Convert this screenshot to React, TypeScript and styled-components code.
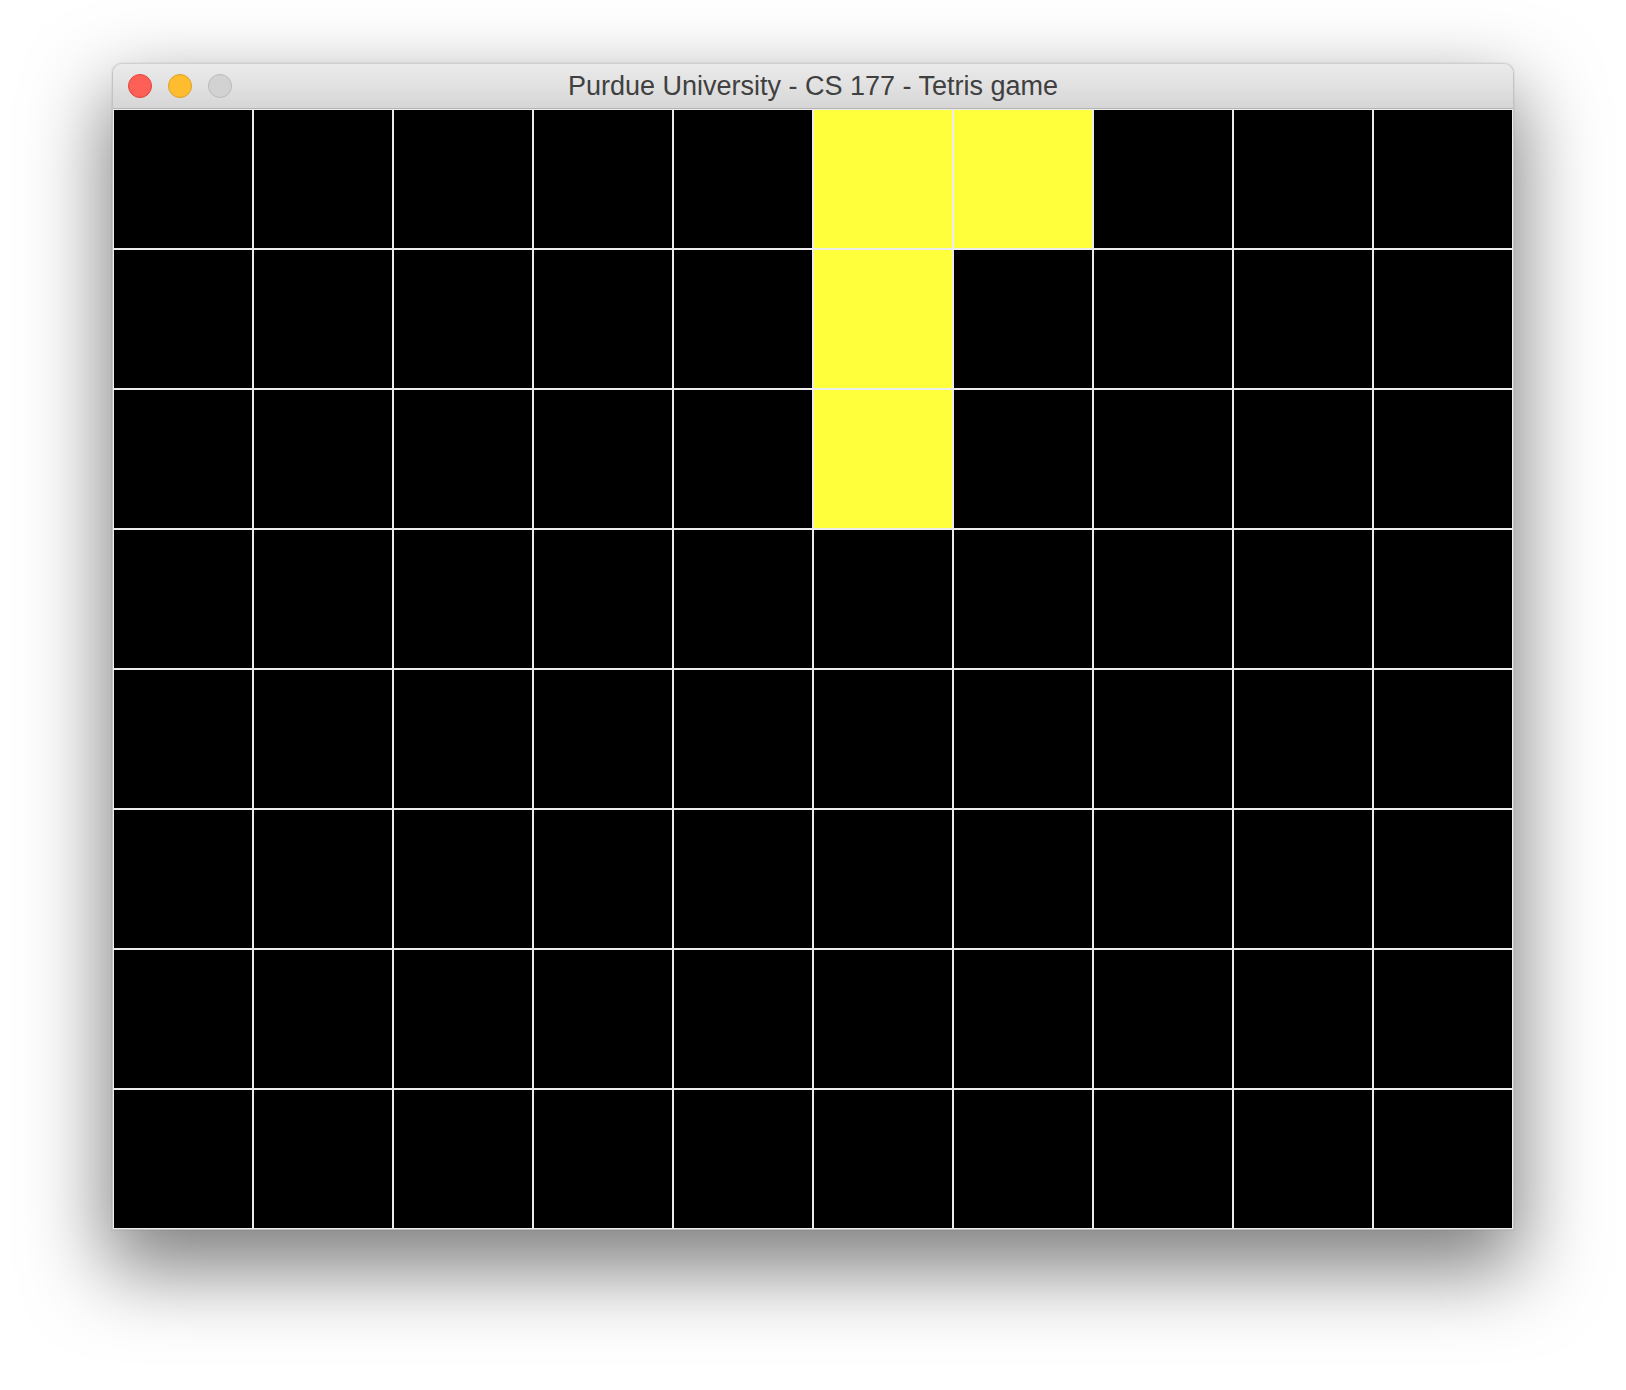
import React from 'react'
import styled, { createGlobalStyle } from 'styled-components'

const GlobalStyle = createGlobalStyle`
  html, body {
    margin: 0;
    padding: 0;
    background: #ffffff;
  }
  body {
    font-family: "Liberation Sans", Arial, sans-serif;
  }
`

const COLS = 10
const ROWS = 8
const CELL = 140

// filled cells of the falling piece, as "row-col"
const filled = new Set(['0-5', '0-6', '1-5', '2-5'])

const Page = styled.div`
  width: 1626px;
  height: 1390px;
  padding: 63px 0 0 112px;
  box-sizing: border-box;
  overflow: hidden;
`

const Window = styled.div`
  width: ${COLS * CELL + 2}px;
  border: 1px solid #c4c4c4;
  border-top-color: #d0d0d0;
  border-radius: 10px 10px 0 0;
  box-sizing: border-box;
  background: #ececec;
  box-shadow: 0 34px 80px 6px rgba(0, 0, 0, 0.5), 0 0 0 1px rgba(0, 0, 0, 0.04);
`

const TitleBar = styled.div`
  position: relative;
  height: 44px;
  display: flex;
  align-items: center;
  justify-content: center;
  border-radius: 9px 9px 0 0;
  background: linear-gradient(#ebebeb, #d6d6d6);
  border-bottom: 1px solid #b4b4b4;
`

const Lights = styled.div`
  position: absolute;
  left: 15px;
  top: 10px;
  display: flex;
  gap: 16px;
`

const Light = styled.span<{ $fill: string; $edge: string }>`
  width: 24px;
  height: 24px;
  border-radius: 50%;
  box-sizing: border-box;
  background: ${(p) => p.$fill};
  border: 1px solid ${(p) => p.$edge};
`

const Title = styled.div`
  font-size: 27px;
  color: #404040;
  margin-top: 1px;
`

const Board = styled.div`
  display: grid;
  grid-template-columns: repeat(${COLS}, ${CELL}px);
  grid-template-rows: repeat(${ROWS}, ${CELL}px);
  background: #000;
`

const Cell = styled.div<{ $on: boolean }>`
  box-sizing: border-box;
  border: 1px solid #ececec;
  background: ${(p) => (p.$on ? '#ffff3b' : '#000000')};
`

export default function App() {
  const cells = []
  for (let r = 0; r < ROWS; r++) {
    for (let c = 0; c < COLS; c++) {
      cells.push(<Cell key={`${r}-${c}`} $on={filled.has(`${r}-${c}`)} />)
    }
  }

  return (
    <>
      <GlobalStyle />
      <Page>
        <Window>
          <TitleBar>
            <Lights>
              <Light $fill="#fe5f57" $edge="#e0443e" />
              <Light $fill="#febc2e" $edge="#dea123" />
              <Light $fill="#d2d2d2" $edge="#b9b9b9" />
            </Lights>
            <Title>Purdue University - CS 177 - Tetris game</Title>
          </TitleBar>
          <Board>{cells}</Board>
        </Window>
      </Page>
    </>
  )
}
